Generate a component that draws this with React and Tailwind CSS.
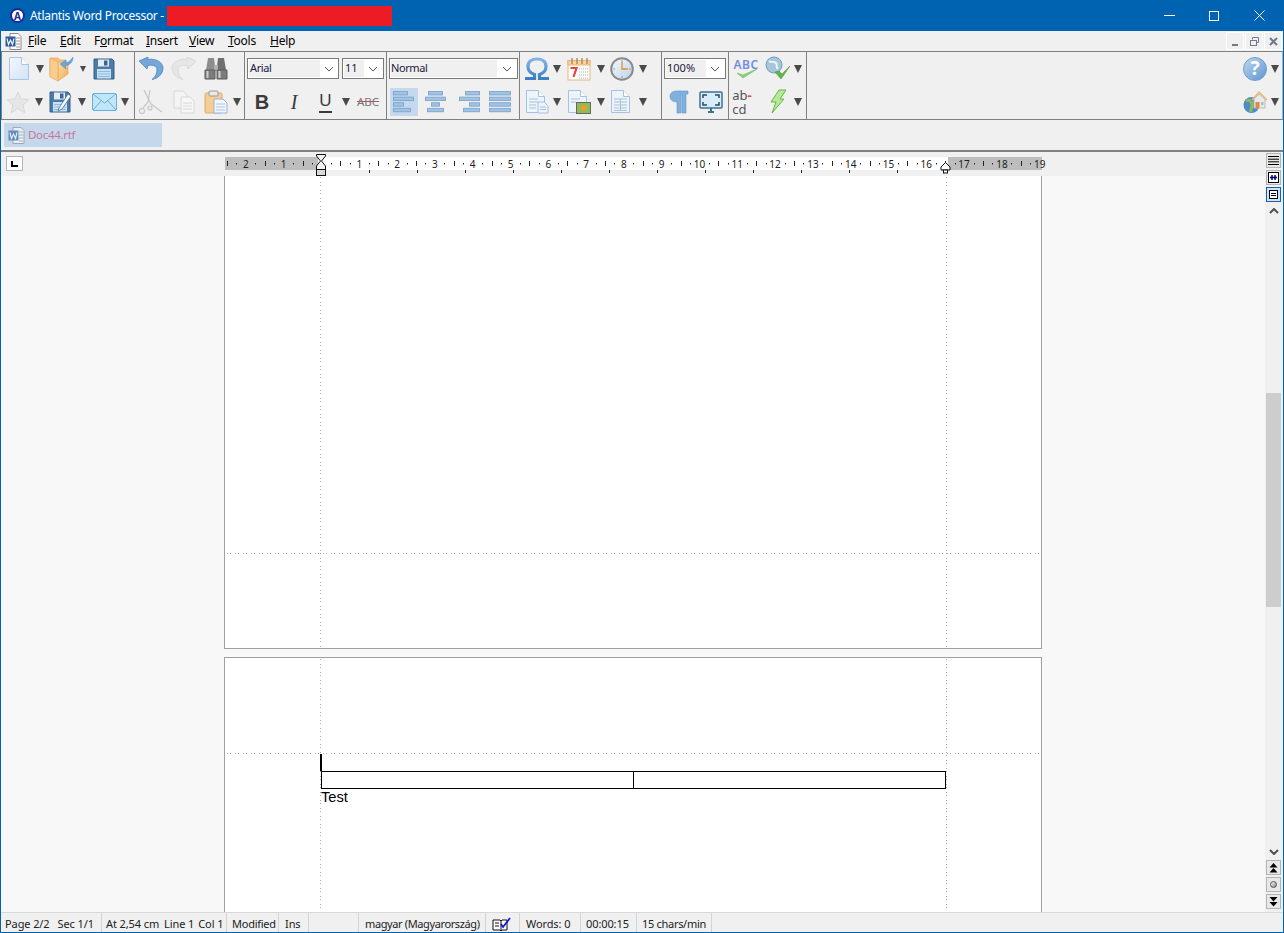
import React from 'react';

const ui = '[font-family:"Noto_Sans",sans-serif]';

// toolbar drop arrow
const Arrow = () => (
  <svg width="8" height="8" viewBox="0 0 8 8"><polygon points="0,0 8,0 4,8" fill="#4a4a4a" /></svg>
);

const Cell = ({ w, children, className = '' }) => (
  <div className={`flex h-full shrink-0 items-center justify-center ${w} ${className}`}>{children}</div>
);

const Drop = ({ w = 'w-[8px]' }) => <Cell w={w}><Arrow /></Cell>;

const Chevron = ({ color = '#555' }) => (
  <svg width="10" height="6" viewBox="0 0 10 6"><path d="M1 1l4 4 4-4" fill="none" stroke={color} strokeWidth="1" /></svg>
);

const Combo = ({ w, text, inner }) => (
  <div className={`flex h-[21px] items-center border border-[#7a7a7a] bg-white p-[1px] ${w}`}>
    <div className={`h-full bg-[#f0f0f0] pl-[1px] text-[11px] leading-[16px] text-[#1a1a3a] ${inner}`}>{text}</div>
    <div className="flex flex-1 justify-center"><Chevron /></div>
  </div>
);

const Group = ({ w, top, bottom }) => (
  <div className={`flex h-full shrink-0 flex-col border-r border-[#808080] ${w}`}>
    <div className="flex h-[33px] items-center">{top}</div>
    <div className="flex h-[33px] items-center">{bottom}</div>
  </div>
);

const DocIcon = () => (
  <svg width="22" height="25" viewBox="0 0 22 25">
    <defs>
      <linearGradient id="docFill" x1="0" y1="0" x2="1" y2="1"><stop offset="0" stopColor="#f3f7fc" /><stop offset="1" stopColor="#d3e2f5" /></linearGradient>
    </defs>
    <path d="M1.500 1.500h12l7 7v15h-19z" fill="url(#docFill)" stroke="#a8c5e8" />
    <path d="M13.500 1.500v7h7" fill="#fff" stroke="#a8c5e8" />
  </svg>
);

const OpenIcon = () => (
  <svg width="26" height="26" viewBox="0 0 26 26">
    <defs>
      <linearGradient id="folderFill" x1="0" y1="0" x2="1" y2="1"><stop offset="0" stopColor="#fde0a8" /><stop offset="1" stopColor="#f3a94f" /></linearGradient>
    </defs>
    <path d="M1 2h8l2 2h6v15H1z" fill="#f6c27a" stroke="#e6a75a" strokeWidth=".7" />
    <path d="M9 6l10 1v11l-10 7z" fill="url(#folderFill)" stroke="#e6a75a" strokeWidth=".7" />
    <path d="M1 2l8 4v19l-8-4z" fill="#f9cd8c" stroke="#e6a75a" strokeWidth=".7" />
    <path d="M24 1c0 5-3 8-8 9l1 3-6-5 6-4 0 3c3-1 5-3 7-6z" fill="#6ea6da" stroke="#4f8bc6" strokeWidth=".5" />
  </svg>
);

const SaveIcon = ({ pen }) => (
  <svg width="25" height="24" viewBox="0 0 25 24">
    <path d="M2 2h18l2 2v18H2z" fill="#4d7aa8" stroke="#34608e" />
    <rect x="6" y="2.500" width="11" height="7" fill="#e4ecf4" />
    <rect x="12" y="3.500" width="3.500" height="5" fill="#3b6592" />
    <rect x="5" y="12" width="14" height="9.500" fill="#c6e2f4" />
    <path d="M6 14.500h12M6 17h12M6 19.500h12" stroke="#8fbcdc" />
    {pen && <path d="M11 18L20 4l3 2-9 13-4 2z" fill="#f4f8fb" stroke="#4a6f95" strokeWidth=".8" />}
  </svg>
);

const UndoIcon = ({ redo, color = '#74a6d8', edge = '#4d86c0' }) => (
  <svg width="26" height="24" viewBox="0 0 26 24" className={redo ? '-scale-x-100' : ''}>
    <path d="M1 4l8 8 1-3.500c5-1 9 .5 9 4.500 0 4-2 7-5 9.500 6-1 11-5.500 11-11.500C25 5 17 1 10 2.500V0z" fill={color} stroke={edge} strokeWidth=".8" />
  </svg>
);

const Binoculars = () => (
  <svg width="24" height="24" viewBox="0 0 24 24">
    <path d="M4 1h6l1 8v4H2z" fill="#8d8d8d" />
    <path d="M14 1h6l2 12h-9V9z" fill="#6f6f6f" />
    <rect x="10" y="8" width="4" height="6" fill="#b0b0b0" />
    <path d="M1 13h10v9H1zM13 13h10v9H13z" fill="#7c7c7c" stroke="#5c5c5c" />
    <path d="M3.500 14v7M15.500 14v7" stroke="#cfcfcf" strokeWidth="2" />
  </svg>
);

const Star = () => (
  <svg width="24" height="24" viewBox="0 0 24 24">
    <polygon points="12,2 15,9 23,9.500 17,15 19,23 12,18.500 5,23 7,15 1,9.500 9,9" fill="#e6e6e6" stroke="#d8d8d8" />
  </svg>
);

const Mail = () => (
  <svg width="25" height="18" viewBox="0 0 25 18">
    <rect x=".5" y=".5" width="24" height="17" rx="1.500" fill="#c3e5f8" stroke="#62b0e0" />
    <path d="M1 1l11.500 9L24 1M1 17l8-9M24 17l-8-9" fill="none" stroke="#62b0e0" />
  </svg>
);

const Scissors = () => (
  <svg width="26" height="26" viewBox="0 0 26 26" fill="none" stroke="#c6c6c6" strokeWidth="1.200">
    <path d="M6 1l7 14 11 8M12 1l-2 12-5 6" />
    <circle cx="4" cy="22" r="2.500" />
    <circle cx="12" cy="19" r="2" />
  </svg>
);

const CopyIcon = () => (
  <svg width="22" height="24" viewBox="0 0 22 24" stroke="#d8d8d8">
    <path d="M1 1h9l4 4v13H1z" fill="#f4f4f4" />
    <path d="M8 7h9l4 4v12H8z" fill="#f7f7f7" />
    <path d="M10 13h9M10 16h9M10 19h9" />
  </svg>
);

const PasteIcon = () => (
  <svg width="24" height="24" viewBox="0 0 24 24">
    <rect x="1" y="3" width="17" height="20" rx="1.500" fill="#f6cd92" stroke="#dca868" />
    <rect x="5" y="1" width="9" height="5" rx="1" fill="#e8e8e8" stroke="#999" />
    <path d="M10 9h9l4 4v10H10z" fill="#f3f7fc" stroke="#93b5da" />
    <path d="M12 14h9M12 17h9M12 20h9" stroke="#a9c6e6" />
  </svg>
);

const AlignIcon = ({ rows }) => (
  <svg width="22" height="22" viewBox="0 0 22 22">
    {rows.map(([x, w], i) => (
      <rect key={i} x={x + 0.5} y={i * 5.6 + 0.5} width={w} height="3.500" fill="#9cc3e8" stroke="#7d9fc2" strokeWidth=".8" />
    ))}
  </svg>
);

const Omega = () => (
  <svg width="26" height="24" viewBox="0 0 26 24">
    <defs>
      <linearGradient id="omegaStroke" x1="0" y1="0" x2="0" y2="1"><stop offset="0" stopColor="#7fb4e6" /><stop offset="1" stopColor="#3b7fc4" /></linearGradient>
    </defs>
    <path d="M1 21.500h9.500v-4C6 16 4 13 4 9.500 4 4.500 8 2 13 2s9 2.500 9 7.500c0 3.500-2 6.500-6.500 8v4H25" fill="none" stroke="url(#omegaStroke)" strokeWidth="3.200" />
  </svg>
);

const Calendar = () => (
  <svg width="24" height="24" viewBox="0 0 24 24">
    <rect x="1" y="3.500" width="22" height="19.500" fill="#fff" stroke="#eab478" />
    <rect x="1" y="3.500" width="22" height="4.500" fill="#f8d49b" stroke="#eab478" />
    <path d="M5 1v6M10 1v6M15 1v6M20 1v6" stroke="#a88a6a" strokeWidth="1.400" />
    <path d="M3.500 11h6l-3 9" fill="none" stroke="#e1473c" strokeWidth="2.200" />
    <path d="M12 12h9M12 15h9M12 18h9M12 21h9" stroke="#aaa" strokeDasharray="1 1" />
  </svg>
);

const Clock = () => (
  <svg width="24" height="24" viewBox="0 0 24 24">
    <defs>
      <linearGradient id="clockFace" x1="0" y1="0" x2="1" y2="1"><stop offset="0" stopColor="#f4f8fc" /><stop offset="1" stopColor="#bcd3ea" /></linearGradient>
    </defs>
    <circle cx="12" cy="12" r="10.800" fill="url(#clockFace)" stroke="#8a8a8a" strokeWidth="2" />
    <path d="M12 5v7h6" fill="none" stroke="#e58b2e" strokeWidth="1.300" />
    <path d="M12 3.500v1M12 19.500v1M3.500 12h1M19.500 12h1" stroke="#555" />
  </svg>
);

const PageIcon = ({ children }) => (
  <svg width="24" height="25" viewBox="0 0 24 25">
    <path d="M1.500 1.500h12l6 6v16h-18z" fill="#eef4fb" stroke="#a3c2e4" />
    <path d="M13.500 1.500v6h6" fill="#fff" stroke="#a3c2e4" />
    {children}
  </svg>
);

const Pilcrow = () => (
  <svg width="20" height="24" viewBox="0 0 20 24">
    <path d="M8 23V12C3 12 1 9 1 6.500 1 3 4 1 8 1h11v3h-2v19h-4V4h-1v19z" fill="#7fb0de" stroke="#5e93c7" strokeWidth=".6" />
  </svg>
);

const Screen = () => (
  <svg width="24" height="24" viewBox="0 0 24 24">
    <rect x="1" y="2" width="22" height="16" rx="1" fill="#d9ecf7" stroke="#3b7390" strokeWidth="1.500" />
    <path d="M4 8V5h4M16 5h4v3M20 12v3h-4M8 15H4v-3" fill="none" stroke="#2b4b60" strokeWidth="1.500" />
    <path d="M9 22h6M12 18v4" stroke="#3b7390" strokeWidth="2" />
  </svg>
);

const GlobeCheck = () => (
  <svg width="26" height="25" viewBox="0 0 26 25">
    <circle cx="9" cy="9" r="8" fill="#a7c6dc" stroke="#6f9fc4" />
    <path d="M4 5c3 2 5 0 7 2s-1 4 2 6" fill="none" stroke="#eef5fa" strokeWidth="2" />
    <path d="M10 16l6 7 9-13-8 8-3-3z" fill="#62b548" stroke="#4e9c38" strokeWidth=".6" />
  </svg>
);

const Bolt = () => (
  <svg width="18" height="25" viewBox="0 0 18 25">
    <polygon points="10,1 17,1 11,10 15,10 3,24 7,13 2,13" fill="#b5e89a" stroke="#63b845" />
  </svg>
);

const Help = () => (
  <div className="flex h-[24px] w-[24px] items-center justify-center rounded-full border border-[#6c9ccb] bg-gradient-to-br from-[#bcd7ef] to-[#5f97cf] text-[19px] font-bold leading-none text-white">?</div>
);

const HomeGlobe = () => (
  <svg width="25" height="25" viewBox="0 0 25 25">
    <circle cx="8.500" cy="16" r="8" fill="#4e8cc4" />
    <path d="M3 12c3-2 5 0 6 3s-2 4-1 8" fill="none" stroke="#8dbb58" strokeWidth="3" />
    <path d="M9 11l7-8 8 8" fill="none" stroke="#f0b670" strokeWidth="1.500" />
    <path d="M11 10l5-5 6 5v9H11z" fill="#e9e9e9" stroke="#bbb" />
    <rect x="12.500" y="13" width="4" height="6" fill="#d88c3c" />
    <rect x="18" y="13" width="2.500" height="3" fill="#aebccc" />
  </svg>
);

const WordIcon = ({ faded }) => (
  <svg width="17" height="17" viewBox="0 0 17 17" className={faded ? 'opacity-60' : ''}>
    <path d="M5 .5h8l3 3v13H5z" fill="#fff" stroke="#8b8b8b" />
    <path d="M11 5h4M11 8h4M11 11h4M11 14h4" stroke="#9a9a9a" />
    <rect x=".5" y="3.500" width="10" height="10" fill="#2a5a9e" />
    <path d="M2 5.500l1.500 6 2-4.500 2 4.500 1.500-6" fill="none" stroke="#fff" strokeWidth="1.100" />
  </svg>
);

const TitleLogo = () => (
  <div className="flex h-[15px] w-[15px] items-center justify-center rounded-full border-2 border-[#1b2a9a] bg-white text-[10px] font-bold leading-none text-[#1b2a9a]">A</div>
);

// ruler is a drawing: ticks + numbers, x in page px minus 225
const RULER_TICKS = [];
for (let k = -10; k <= 76; k++) RULER_TICKS.push(k);
const STOPS = [];
for (let s = 1; s <= 13; s++) STOPS.push(s);

const Ruler = () => (
  <svg width="818" height="24" viewBox="0 0 818 24" className="ml-[202px] shrink-0 overflow-visible [font-family:'Noto_Sans',sans-serif]">
    <rect x="0" y="5" width="817" height="13" fill="#bdbdbd" />
    <rect x="93" y="5" width="630" height="13" fill="#fff" />
    {RULER_TICKS.map((k) => {
      const x = 96.5 + (37.8 * k) / 4;
      if (k === 0) return null;
      if (k % 4 === 0)
        return <text key={k} x={x} y="11.500" fontSize="10" textAnchor="middle" dominantBaseline="central" fill="#222">{Math.abs(k / 4)}</text>;
      if (k % 2 === 0) return <rect key={k} x={Math.round(x)} y="9" width="1" height="5" fill="#222" />;
      return <rect key={k} x={Math.round(x)} y="11" width="1" height="1.500" fill="#222" />;
    })}
    {STOPS.map((s) => <rect key={s} x={96 + 48 * s} y="18" width="1" height="3" fill="#222" />)}
    <path d="M91.500 2.500h9v1.500l-4 5 4 5v3.500h-9V14l4-5-4-5z" fill="#f4f4f4" stroke="#111" />
    <rect x="91.500" y="17.500" width="9" height="6" fill="#d8d8d8" stroke="#111" />
    <path d="M720.500 10.500l-4.500 4.500v3h9v-3z" fill="#fff" stroke="#111" />
    <rect x="718.500" y="18" width="4" height="3" fill="#fff" stroke="#111" />
  </svg>
);

const VDots = ({ x }) => (
  <div className={`absolute top-0 bottom-0 w-[1px] bg-[repeating-linear-gradient(180deg,transparent_0_1px,#aaa_1px_2px,transparent_2px_6px,#aaa_6px_7px,transparent_7px_8px)] ${x}`} />
);
const HDots = () => (
  <div className="h-[1px] w-full bg-[repeating-linear-gradient(90deg,transparent_0_2px,#aaa_2px_3px,transparent_3px_5px,#aaa_5px_6px,transparent_6px_8px)]" />
);

const ScrollBtn = ({ active, children, className = '' }) => (
  <div className={`flex h-[15px] w-[15px] items-center justify-center border ${active ? 'border-[#1c5fa8] bg-[#cce4f7]' : 'border-[#b4b4b4] bg-[#e8e8e8]'} ${className}`}>{children}</div>
);

const StatusCell = ({ w, children, className = 'pl-[6px]' }) => (
  <div className={`flex h-full shrink-0 items-center whitespace-pre border-r border-[#d4d4d4] pt-[3px] ${w} ${className}`}>{children}</div>
);

export default function App() {
  return (
    <div className={`flex h-[933px] w-[1284px] flex-col overflow-hidden border-x border-b border-[#0063b1] bg-[#f0f0f0] text-black ${ui}`}>
      {/* title bar */}
      <div className="flex h-[31px] shrink-0 items-center bg-[#0063b1] text-white">
        <div className="ml-[9px]"><TitleLogo /></div>
        <span className="ml-[5px] text-[12px] tracking-[-0.3px]">Atlantis Word Processor -</span>
        <div className="ml-[3px] h-[20px] w-[225px] bg-[#ed1c24]" />
        <div className="ml-auto flex h-full items-center">
          <div className="h-[1px] w-[11px] bg-white" />
          <div className="ml-[34px] h-[10px] w-[10px] border border-white" />
          <svg width="11" height="11" viewBox="0 0 11 11" className="ml-[35px] mr-[18px]"><path d="M.5.5l10 10M10.500.5l-10 10" stroke="#fff" /></svg>
        </div>
      </div>

      {/* menu */}
      <div className="flex h-[20px] shrink-0 items-center text-[12px] tracking-[-0.25px]">
        <div className="ml-[4px] flex w-[23px]"><WordIcon /></div>
        <span className="w-[32px]"><u>F</u>ile</span>
        <span className="w-[34px]"><u>E</u>dit</span>
        <span className="w-[52px]">F<u>o</u>rmat</span>
        <span className="w-[43px]"><u>I</u>nsert</span>
        <span className="w-[39px]"><u>V</u>iew</span>
        <span className="w-[42px]"><u>T</u>ools</span>
        <span><u>H</u>elp</span>
        <div className="ml-auto mr-[1px] flex gap-[1px]">
          <div className="flex h-[18px] w-[18px] items-end justify-center border border-white pb-[3px]"><div className="h-[2px] w-[6px] bg-[#6f7b8a]" /></div>
          <div className="flex h-[18px] w-[18px] items-center justify-center border border-white">
            <svg width="9" height="9" viewBox="0 0 9 9" fill="none" stroke="#6f7b8a"><path d="M2.500 2.500V.5h6v5h-2" /><rect x=".5" y="3.500" width="6" height="5" /></svg>
          </div>
          <div className="flex h-[18px] w-[18px] items-center justify-center border border-white">
            <svg width="9" height="9" viewBox="0 0 9 9"><path d="M1 1l7 7M8 1L1 8" stroke="#6f7b8a" strokeWidth="2" /></svg>
          </div>
        </div>
      </div>

      {/* toolbar */}
      <div className="flex h-[69px] shrink-0 border border-[#808080] border-r-[#b0b0b0]">
        <Group
          w="w-[133px]"
          top={<><Cell w="w-[33px]"><DocIcon /></Cell><Drop w="w-[9px]" /><Cell w="w-[36px]"><OpenIcon /></Cell><Drop w="w-[6px]" /><Cell w="w-[36px]"><SaveIcon /></Cell></>}
          bottom={<><Cell w="w-[32px]"><Star /></Cell><Drop w="w-[10px]" /><Cell w="w-[32px]"><SaveIcon pen /></Cell><Drop w="w-[12px]" /><Cell w="w-[32px]"><Mail /></Cell><Drop w="w-[10px]" /></>}
        />
        <Group
          w="w-[110px]"
          top={<><Cell w="w-[32px]"><UndoIcon /></Cell><Cell w="w-[33px]"><UndoIcon redo color="#e6e6e6" edge="#d4d4d4" /></Cell><Cell w="w-[32px]"><Binoculars /></Cell></>}
          bottom={<><Cell w="w-[32px]"><Scissors /></Cell><Cell w="w-[33px]"><CopyIcon /></Cell><Cell w="w-[32px]"><PasteIcon /></Cell><Drop w="w-[10px]" /></>}
        />
        <Group
          w="w-[142px]"
          top={<div className="flex gap-[3px] pl-[2px]"><Combo w="w-[92px]" text="Arial" inner="w-[71px] tracking-[-0.4px]" /><Combo w="w-[42px]" text="11" inner="w-[20px]" /></div>}
          bottom={<>
            <Cell w="w-[34px]"><span className="[font-family:'Liberation_Sans',sans-serif] text-[20px] font-bold text-[#3a3a3a]">B</span></Cell>
            <Cell w="w-[30px]"><span className="[font-family:'Liberation_Serif',serif] text-[20px] italic text-[#3a3a3a]">I</span></Cell>
            <Cell w="w-[33px]"><span className="border-b-2 border-[#3a3a3a] [font-family:'Liberation_Sans',sans-serif] text-[17px] leading-[20px] text-[#3a3a3a]">U</span></Cell>
            <Drop />
            <Cell w="w-[36px]"><span className="text-[11.5px] text-[#777] line-through decoration-[#a85a5a]">ABC</span></Cell>
          </>}
        />
        <Group
          w="w-[133px]"
          top={<div className="pl-[2px]"><Combo w="w-[129px]" text="Normal" inner="w-[106px] !pl-0 tracking-[-0.4px]" /></div>}
          bottom={<>
            <Cell w="w-[28px]" className="ml-[3px] !h-[28px] bg-[#c5d9ee]"><AlignIcon rows={[[0, 14], [0, 20], [0, 10], [0, 17]]} /></Cell>
            <Cell w="w-[36px]"><AlignIcon rows={[[3, 14], [0, 20], [6, 8], [2, 16]]} /></Cell>
            <Cell w="w-[32px]"><AlignIcon rows={[[6, 14], [0, 20], [10, 10], [4, 16]]} /></Cell>
            <Cell w="w-[28px]"><AlignIcon rows={[[0, 21], [0, 21], [0, 21], [0, 21]]} /></Cell>
          </>}
        />
        <Group
          w="w-[142px]"
          top={<><Cell w="w-[33px]"><Omega /></Cell><Drop /><Cell w="w-[36px]"><Calendar /></Cell><Drop /><Cell w="w-[34px]"><Clock /></Cell><Drop /></>}
          bottom={<>
            <Cell w="w-[33px]"><PageIcon><path d="M4 10h9M4 13h9M4 16h7M4 19h7" stroke="#a9c1da" /><path d="M13 13h6l4 4v7H13z" fill="#eef4fb" stroke="#a3c2e4" /><path d="M15 18h6M15 20.500h6" stroke="#a9c1da" /></PageIcon></Cell>
            <Drop />
            <Cell w="w-[36px]"><PageIcon><path d="M4 10h9M4 13h5" stroke="#a9c1da" /><rect x="9.500" y="13.500" width="14" height="11" fill="#8dbb58" stroke="#666" /><circle cx="16.500" cy="19" r="3" fill="#e5a02e" /></PageIcon></Cell>
            <Drop />
            <Cell w="w-[34px]"><PageIcon><path d="M4 10h13M4 13h13M4 16h13M4 19h13M4 21.500h13M10.500 10v11.500" stroke="#a9c1da" /></PageIcon></Cell>
            <Drop />
          </>}
        />
        <Group
          w="w-[67px]"
          top={<div className="pl-[2px]"><Combo w="w-[62px]" text="100%" inner="w-[40px]" /></div>}
          bottom={<><Cell w="w-[34px]"><Pilcrow /></Cell><Cell w="w-[30px]"><Screen /></Cell></>}
        />
        <Group
          w="w-[78px]"
          top={<>
            <Cell w="w-[34px]" className="relative">
              <span className="mb-[8px] text-[12px] font-semibold leading-none tracking-[0.5px] text-[#6f8fe0]">ABC</span>
              <svg width="22" height="11" viewBox="0 0 22 11" className="absolute bottom-[6px] left-[7px]"><path d="M1 5l6 5L21 1 7 7z" fill="#8ed07a" stroke="#6fb85a" strokeWidth=".6" /></svg>
            </Cell>
            <Cell w="w-[30px]"><GlobeCheck /></Cell>
            <Drop w="w-[10px]" />
          </>}
          bottom={<>
            <Cell w="w-[34px]" className="pr-[8px]">
              <div className="text-[13px] leading-[14px] text-[#555]">
                <div className="h-[14px]">ab<span className="font-bold text-[#e84040]">-</span></div>
                <div className="h-[14px]">cd</div>
              </div>
            </Cell>
            <Cell w="w-[30px]"><Bolt /></Cell>
            <Drop w="w-[10px]" />
          </>}
        />
        <div className="ml-auto flex h-full flex-col pr-[1px]">
          <div className="flex h-[33px] items-center"><Cell w="w-[28px]"><Help /></Cell><Drop w="w-[12px]" /></div>
          <div className="flex h-[33px] items-center"><Cell w="w-[28px]"><HomeGlobe /></Cell><Drop w="w-[12px]" /></div>
        </div>
      </div>

      {/* document tabs */}
      <div className="flex h-[32px] shrink-0 items-start border-b-2 border-[#808080] pl-[3px] pt-[3px]">
        <div className="flex h-[24px] w-[158px] items-center gap-[3px] bg-[#c5d7eb] pl-[4px] text-[11.5px] tracking-[-0.3px] text-[#c8789c]">
          <WordIcon faded />
          <span>Doc44.rtf</span>
        </div>
      </div>

      <div className="flex min-h-0 flex-1">
        <div className="flex min-w-0 flex-1 flex-col">
          {/* ruler */}
          <div className="flex h-[24px] shrink-0 items-start pl-[5px]">
            <div className="mt-[4px] flex h-[15px] w-[17px] shrink-0 items-center justify-center border border-[#b4b4b4] bg-white">
              <svg width="7" height="6" viewBox="0 0 7 6"><path d="M1 0v5h6" fill="none" stroke="#000" strokeWidth="2" /></svg>
            </div>
            <Ruler />
          </div>

          {/* pages */}
          <div className="min-h-0 flex-1 overflow-hidden bg-[#f8f8f8]">
            <div className="relative ml-[223px] h-[473px] w-[818px] border-x border-b border-[#a0a0a0] bg-white">
              <VDots x="left-[95px]" />
              <VDots x="left-[721px]" />
              <div className="h-[377px]" />
              <HDots />
            </div>
            <div className="relative ml-[223px] mt-[8px] h-[300px] w-[818px] border border-[#a0a0a0] bg-white">
              <VDots x="left-[95px]" />
              <VDots x="left-[721px]" />
              <div className="h-[95px]" />
              <HDots />
              <div className="relative ml-[96px] w-[625px]">
                <div className="-ml-[1px] h-[17px] w-[2px] bg-black" />
                <div className="flex h-[18px] border border-black bg-white">
                  <div className="w-[312px] border-r border-black" />
                </div>
                <div className="[font-family:'Liberation_Sans',sans-serif] text-[14.67px] leading-[17px]">Test</div>
              </div>
            </div>
          </div>
        </div>

        {/* scroll column */}
        <div className="flex w-[18px] shrink-0 flex-col pl-[1px] pt-[1px]">
          <ScrollBtn>
            <svg width="11" height="9" viewBox="0 0 11 9"><path d="M0 .5h11M0 3.200h11M0 5.800h11M0 8.500h11" stroke="#000" /></svg>
          </ScrollBtn>
          <ScrollBtn className="mt-[2px]">
            <svg width="11" height="11" viewBox="0 0 11 11"><rect x=".5" y=".5" width="10" height="10" fill="#fff" stroke="#000" /><path d="M2 5.500h7M4 3v5M7 3v5" stroke="#00007f" strokeWidth="1.500" /></svg>
          </ScrollBtn>
          <ScrollBtn active className="mt-[2px]">
            <svg width="9" height="9" viewBox="0 0 9 9"><rect x=".5" y=".5" width="8" height="8" fill="#fff" stroke="#000" /><path d="M2 3.500h5M2 5.500h5" stroke="#000" /></svg>
          </ScrollBtn>
          <div className="flex h-[17px] w-[15px] items-center justify-center">
            <svg width="10" height="6" viewBox="0 0 10 6"><path d="M1 5l4-4 4 4" fill="none" stroke="#505050" strokeWidth="2" /></svg>
          </div>
          <div className="min-h-0 flex-1">
            <div className="mt-[174px] h-[214px] w-[15px] bg-[#cdcdcd]" />
          </div>
          <div className="flex h-[16px] w-[15px] items-center justify-center">
            <svg width="10" height="6" viewBox="0 0 10 6"><path d="M1 1l4 4 4-4" fill="none" stroke="#505050" strokeWidth="2" /></svg>
          </div>
          <ScrollBtn>
            <svg width="9" height="10" viewBox="0 0 9 10"><path d="M4.500 0l4 4.500H.5zM4.500 5l4 4.500H.5z" fill="#000" /></svg>
          </ScrollBtn>
          <ScrollBtn className="mt-[2px]">
            <div className="h-[7px] w-[7px] rounded-full border border-[#555] bg-gradient-to-br from-white to-[#888]" />
          </ScrollBtn>
          <ScrollBtn className="mb-[3px] mt-[2px]">
            <svg width="9" height="10" viewBox="0 0 9 10"><path d="M.5 0h8l-4 4.500zM.5 5h8l-4 4.500z" fill="#000" /></svg>
          </ScrollBtn>
        </div>
      </div>

      {/* status bar */}
      <div className="flex h-[20px] shrink-0 items-center border-t border-[#d9d9d9] text-[11px] tracking-[-0.1px] text-[#222]">
        <StatusCell w="w-[101px]" className="pl-[4px]">Page 2/2<span className="ml-[8px]">Sec 1/1</span></StatusCell>
        <StatusCell w="w-[125px]" className="pl-[4px]">At 2,54 cm<span className="ml-[5px]">Line 1</span><span className="ml-[4px]">Col 1</span></StatusCell>
        <StatusCell w="w-[52px]" className="pl-[5px] tracking-[-0.25px]">Modified</StatusCell>
        <StatusCell w="w-[30px]">Ins</StatusCell>
        <StatusCell w="w-[50px]"> </StatusCell>
        <StatusCell w="w-[127px]" className="pl-[6px] tracking-[-0.38px]">magyar (Magyarország)</StatusCell>
        <StatusCell w="w-[34px]">
          <svg width="19" height="15" viewBox="0 0 19 15">
            <path d="M1 3h7l1 1 1-1h5v10h-5l-1 1-1-1H1z" fill="#fff" stroke="#111" />
            <path d="M9 4v9M3 6h4M3 9h4" stroke="#111" />
            <path d="M9 7l2 3 7-9" fill="none" stroke="#1717d0" strokeWidth="1.800" />
          </svg>
        </StatusCell>
        <StatusCell w="w-[61px]">Words: 0</StatusCell>
        <StatusCell w="w-[56px]" className="pl-[5px]">00:00:15</StatusCell>
        <StatusCell w="w-[75px]" className="pl-[5px] tracking-[-0.3px]">15 chars/min</StatusCell>
      </div>
    </div>
  );
}
